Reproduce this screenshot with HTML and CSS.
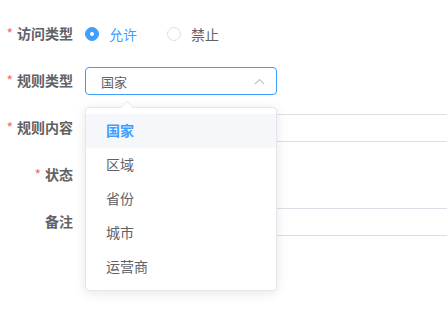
FILE: index.html
```html
<!DOCTYPE html>
<html lang="zh-CN">
<head>
    <meta charset="UTF-8">
    <meta name="viewport" content="width=device-width, initial-scale=1.0">
    <title>访问规则</title>
    <link rel="stylesheet" href="styles.css">
</head>
<body>
    <div class="page">
        <form class="rule-form">
            <div class="form-item">
                <label class="form-label is-required">访问类型</label>
                <div class="form-content">
                    <label class="radio is-checked">
                        <span class="radio-inner"></span>
                        <span class="radio-label">允许</span>
                    </label>
                    <label class="radio">
                        <span class="radio-inner"></span>
                        <span class="radio-label">禁止</span>
                    </label>
                </div>
            </div>

            <div class="form-item">
                <label class="form-label is-required">规则类型</label>
                <div class="form-content">
                    <div class="select">
                        <div class="select-input">
                            <span>国家</span>
                            <svg class="select-arrow" width="11" height="7" viewBox="0 0 11 7">
                                <path d="M1 6 L5.5 1.5 L10 6" fill="none" stroke="#c0c4cc" stroke-width="1.1"/>
                            </svg>
                        </div>
                        <ul class="select-dropdown">
                            <li class="select-option is-selected">国家</li>
                            <li class="select-option">区域</li>
                            <li class="select-option">省份</li>
                            <li class="select-option">城市</li>
                            <li class="select-option">运营商</li>
                        </ul>
                    </div>
                </div>
            </div>

            <div class="form-item">
                <label class="form-label is-required">规则内容</label>
                <div class="form-content">
                    <div class="text-input"></div>
                </div>
            </div>

            <div class="form-item">
                <label class="form-label is-required">状态</label>
                <div class="form-content">
                    <span class="switch"></span>
                </div>
            </div>

            <div class="form-item">
                <label class="form-label">备注</label>
                <div class="form-content">
                    <div class="text-input"></div>
                </div>
            </div>
        </form>
    </div>
</body>
</html>
```

FILE: styles.css
```css
body {
    font-family: "Noto Sans CJK SC", "Noto Sans", sans-serif;
    margin: 0;
    background: #fff;
    color: #606266;
    font-size: 14px;
}
.page {
    height: 100vh;
    overflow: hidden;
    padding-top: 20px;
    box-sizing: border-box;
}
.rule-form {
    width: 460px;
}
.form-item {
    display: flex;
    height: 28px;
    margin-bottom: 19px;
}
.form-label {
    width: 85px;
    flex: none;
    box-sizing: border-box;
    padding-right: 12px;
    text-align: right;
    line-height: 27px;
    font-weight: bold;
    color: #606266;
}
.form-label.is-required::before {
    content: "*";
    color: #f56c6c;
    margin-right: 4px;
    font-weight: normal;
}
.form-content {
    flex: 1;
    display: flex;
    align-items: center;
}

/* radio */
.radio {
    display: flex;
    align-items: center;
    margin-right: 30px;
    cursor: pointer;
}
.radio-inner {
    width: 14px;
    height: 14px;
    box-sizing: border-box;
    border: 1px solid #dcdfe6;
    border-radius: 50%;
    background: #fff;
    position: relative;
}
.radio-label {
    padding-left: 10px;
    line-height: 28px;
}
.radio.is-checked .radio-inner {
    border-color: #409eff;
    background: #409eff;
}
.radio.is-checked .radio-inner::after {
    content: "";
    position: absolute;
    left: 50%;
    top: 50%;
    width: 4px;
    height: 4px;
    margin: -2px 0 0 -2px;
    border-radius: 50%;
    background: #fff;
}
.radio.is-checked .radio-label {
    color: #409eff;
}

/* select */
.select {
    position: relative;
    z-index: 10;
    width: 192px;
}
.select-input {
    height: 28px;
    box-sizing: border-box;
    border: 1px solid #409eff;
    border-radius: 4px;
    padding: 0 11px 0 15px;
    display: flex;
    align-items: center;
    justify-content: space-between;
    font-size: 13px;
    color: #606266;
}
.select-dropdown {
    position: absolute;
    left: 0;
    top: 40px;
    width: 192px;
    box-sizing: border-box;
    margin: 0;
    padding: 6px 0;
    list-style: none;
    background: #fff;
    border: 1px solid #e4e7ed;
    border-radius: 4px;
    box-shadow: 0 2px 12px rgba(0,0,0,0.1);
}
.select-dropdown::before,
.select-dropdown::after {
    content: "";
    position: absolute;
    left: 35px;
    border: 6px solid transparent;
    border-top-width: 0;
}
.select-dropdown::before {
    top: -7px;
    border-bottom-color: #e4e7ed;
}
.select-dropdown::after {
    top: -6px;
    border-bottom-color: #fff;
}
.select-option {
    height: 34px;
    line-height: 33px;
    padding: 0 20px;
    color: #606266;
}
.select-option.is-selected {
    color: #409eff;
    font-weight: bold;
    background: #f5f7fa;
}

/* inputs */
.text-input {
    flex: 1;
    height: 28px;
    box-sizing: border-box;
    border: 1px solid #dcdfe6;
    border-radius: 4px;
}
.switch {
    width: 40px;
    height: 20px;
    border-radius: 10px;
    background: #409eff;
}
```
